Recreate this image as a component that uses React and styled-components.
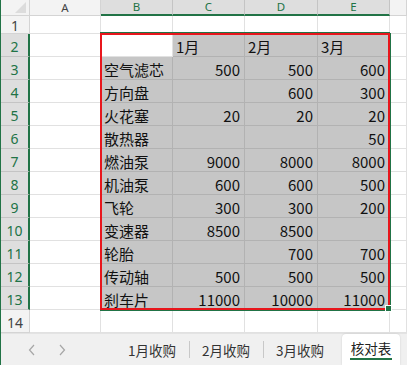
import React from "react";
import styled, { createGlobalStyle } from "styled-components";

const GlobalStyle = createGlobalStyle`
  html, body {
    margin: 0;
    padding: 0;
    background: #ffffff;
  }
  body {
    font-family: "Noto Sans CJK SC", "Noto Sans", sans-serif;
  }
`;

const GREEN = "#217346";

const Window = styled.div`
  width: 407px;
  height: 365px;
  overflow: hidden;
  border-left: 1px solid ${GREEN};
  box-sizing: border-box;
  display: flex;
  flex-direction: column;
`;

const Sheet = styled.div`
  height: 333px;
  flex-shrink: 0;
  overflow: hidden;
  display: grid;
  grid-template-columns: 29px 71px 72px 72px 73px 72px 1fr;
  grid-template-rows: 16px 18px repeat(13, 23px);
`;

const Corner = styled.div`
  grid-row: 1;
  grid-column: 1;
  background: #f3f3f3;
  border-right: 1px solid #d4d4d4;
  border-bottom: 1px solid #d4d4d4;
  box-sizing: border-box;
  position: relative;
  &::after {
    content: "";
    position: absolute;
    right: 3px;
    bottom: 2px;
    width: 0;
    height: 0;
    border-left: 11px solid transparent;
    border-bottom: 11px solid #dcdcdc;
  }
`;

const ColHead = styled.div`
  grid-row: 1;
  grid-column: ${(p) => p.$c};
  background: ${(p) => (p.$sel ? "#dedede" : "#f3f3f3")};
  color: ${(p) => (p.$sel ? GREEN : "#444")};
  border-right: 1px solid ${(p) => (p.$sel ? "#c4c4c4" : "#d4d4d4")};
  border-bottom: ${(p) => (p.$sel ? `2px solid ${GREEN}` : "1px solid #d4d4d4")};
  box-sizing: border-box;
  font-family: "Noto Sans", sans-serif;
  font-size: 11.5px;
  line-height: 14px;
  display: flex;
  justify-content: center;
  align-items: center;
`;

const RowHead = styled.div`
  grid-row: ${(p) => p.$r};
  grid-column: 1;
  background: ${(p) => (p.$sel ? "#dedede" : "#f3f3f3")};
  color: ${(p) => (p.$sel ? GREEN : "#444")};
  border-right: ${(p) => (p.$sel ? `2px solid ${GREEN}` : "1px solid #d4d4d4")};
  border-bottom: 1px solid ${(p) => (p.$sel ? "#c4c4c4" : "#d4d4d4")};
  box-sizing: border-box;
  font-family: "Noto Sans", sans-serif;
  font-size: 14px;
  display: flex;
  justify-content: center;
  align-items: center;
  padding-top: 2px;
`;

const Cell = styled.div`
  grid-row: ${(p) => p.$r};
  grid-column: ${(p) => p.$c};
  background: ${(p) => (p.$fill ? "#c6c6c6" : "#ffffff")};
  border-right: 1px solid ${(p) => (p.$fill ? "#b2b2b2" : "#e1e1e1")};
  border-bottom: 1px solid ${(p) => (p.$fill ? "#b2b2b2" : "#e1e1e1")};
  box-sizing: border-box;
  color: #111;
  font-size: 15px;
  white-space: nowrap;
  display: flex;
  align-items: center;
  justify-content: ${(p) => (p.$num ? "flex-end" : "flex-start")};
  padding: 2px 4px 0 3px;
  overflow: hidden;
`;

const Selection = styled.div`
  grid-column: 3 / 7;
  grid-row: 3 / 15;
  margin: -1px 0 0 -1px;
  border: 2px solid #e8161c;
  box-shadow: 0 -1px 0 ${GREEN}, 1px 0 0 ${GREEN}, 0 1px 0 ${GREEN};
  position: relative;
  pointer-events: none;
`;

const FillHandle = styled.span`
  position: absolute;
  right: -4px;
  bottom: -4px;
  width: 5px;
  height: 5px;
  background: ${GREEN};
  border: 1px solid #fff;
`;

const TabBar = styled.div`
  flex: 1;
  background: #f0f0f0;
  border-top: 1px solid #e3e3e3;
  display: flex;
  align-items: stretch;
`;

const Nav = styled.div`
  width: 114px;
  flex-shrink: 0;
  display: flex;
  align-items: center;
  gap: 22px;
  padding-left: 27px;
  box-sizing: border-box;
`;

const Tab = styled.div`
  flex-shrink: 0;
  white-space: nowrap;
  display: flex;
  align-items: center;
  justify-content: center;
  font-size: 13.5px;
  color: #333;
  padding: 0 13px;
  position: relative;
  & + &::before {
    content: "";
    position: absolute;
    left: 0;
    top: 7px;
    bottom: 7px;
    border-left: 1px solid #c8c8c8;
  }
`;

const ActiveTab = styled.div`
  flex-shrink: 0;
  margin-left: 5px;
  width: 58px;
  background: #ffffff;
  border-radius: 4px 4px 0 0;
  box-shadow: 0 0 2px rgba(0, 0, 0, 0.15);
  display: flex;
  flex-direction: column;
  align-items: center;
  justify-content: center;
  font-size: 13.5px;
  white-space: nowrap;
  color: #222;
  span {
    border-bottom: 2px solid ${GREEN};
    line-height: 18px;
    padding: 0 1px 1px;
  }
`;

const Chevron = ({ dir }) => (
  <svg width="8" height="12" viewBox="0 0 8 12">
    <path
      d={dir === "left" ? "M6 1 L1.5 6 L6 11" : "M2 1 L6.5 6 L2 11"}
      fill="none"
      stroke="#a6a6a6"
      strokeWidth="1.2"
    />
  </svg>
);

const data = [
  ["", "1月", "2月", "3月"],
  ["空气滤芯", 500, 500, 600],
  ["方向盘", "", 600, 300],
  ["火花塞", 20, 20, 20],
  ["散热器", "", "", 50],
  ["燃油泵", 9000, 8000, 8000],
  ["机油泵", 600, 600, 500],
  ["飞轮", 300, 300, 200],
  ["变速器", 8500, 8500, ""],
  ["轮胎", "", 700, 700],
  ["传动轴", 500, 500, 500],
  ["刹车片", 11000, 10000, 11000],
];

const colNames = ["A", "B", "C", "D", "E", ""];

const App = () => {
  const rows = [];
  for (let r = 1; r <= 14; r++) {
    const sel = r >= 2 && r <= 13;
    rows.push(
      <RowHead key={"h" + r} $r={r + 1} $sel={sel}>
        {r}
      </RowHead>
    );
    colNames.forEach((c, ci) => {
      let value = "";
      let fill = false;
      if (sel && ci >= 1 && ci <= 4) {
        value = data[r - 2][ci - 1];
        fill = !(r === 2 && ci === 1);
      }
      rows.push(
        <Cell
          key={r + "-" + ci}
          $r={r + 1}
          $c={ci + 2}
          $fill={fill}
          $num={typeof value === "number"}
        >
          {value}
        </Cell>
      );
    });
  }

  return (
    <>
      <GlobalStyle />
      <Window>
        <Sheet>
          <Corner />
          {colNames.map((c, i) => (
            <ColHead key={i} $c={i + 2} $sel={i >= 1 && i <= 4}>
              {c}
            </ColHead>
          ))}
          {rows}
          <Selection>
            <FillHandle />
          </Selection>
        </Sheet>
        <TabBar>
          <Nav>
            <Chevron dir="left" />
            <Chevron dir="right" />
          </Nav>
          <Tab>1月收购</Tab>
          <Tab>2月收购</Tab>
          <Tab>3月收购</Tab>
          <ActiveTab>
            <span>核对表</span>
          </ActiveTab>
        </TabBar>
      </Window>
    </>
  );
};

export default App;
